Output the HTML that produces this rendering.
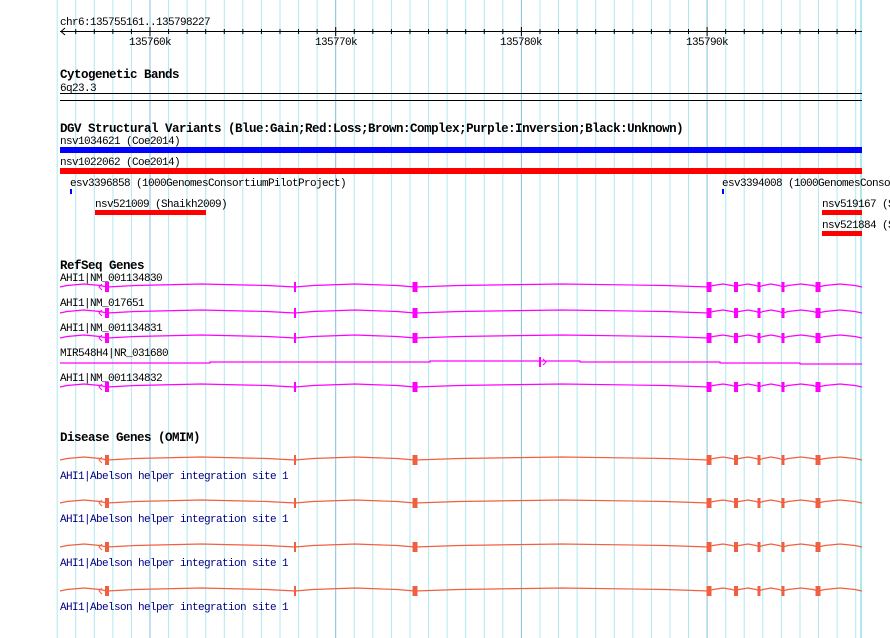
<!DOCTYPE html>
<html><head><meta charset="utf-8"><style>
html,body{margin:0;padding:0;background:#fff;width:890px;height:638px;overflow:hidden}
svg{display:block}
text{font-family:"Liberation Mono",monospace;font-size:11px;letter-spacing:-0.6px}
.b{font-weight:bold;font-size:12.5px;letter-spacing:-0.5px}
</style></head><body>
<svg id="s" width="890" height="638" xmlns="http://www.w3.org/2000/svg"></svg>
<script>
var s=document.getElementById('s'),h='';
for(var i=-5;i<=38;i++){var x=150+i*18.57;if(x<56||x>864)continue;var maj=((i%10)+10)%10==0;
h+='<line x1="'+x.toFixed(1)+'" y1="0" x2="'+x.toFixed(1)+'" y2="638" stroke="'+(maj?'#80c0e0':'#b0e8f0')+'" stroke-width="1"/>';}
h+='<rect x="860" y="0" width="2" height="638" fill="#b0e8f0"/>';
function t(x,y,str,c,b){h+='<text x="'+x+'" y="'+y+'" fill="'+(c||'#000')+'"'+(b?' class="b"':'')+'>'+str+'</text>';}
t(60,25,'chr6:135755161..135798227');
h+='<line x1="60" y1="31.5" x2="862" y2="31.5" stroke="#000"/>';
h+='<polyline points="65,28 61,31.5 65,35" fill="none" stroke="#000"/>';
for(var i=-5;i<=38;i++){var x=150+i*18.57;if(x<60||x>862)continue;var maj=((i%10)+10)%10==0;h+='<line x1="'+x+'" y1="'+(maj?27:29)+'" x2="'+x+'" y2="'+(maj?36:34)+'" stroke="#000"/>';}
t(129,45,'135760k');t(315,45,'135770k');t(500,45,'135780k');t(686,45,'135790k');
t(60,78,'Cytogenetic Bands','#000',1);t(60,91,'6q23.3');
h+='<rect x="60" y="93" width="802" height="1" fill="#000"/><rect x="60" y="100" width="802" height="1" fill="#000"/>';
t(60,132,'DGV Structural Variants (Blue:Gain;Red:Loss;Brown:Complex;Purple:Inversion;Black:Unknown)','#000',1);
t(60,144,'nsv1034621 (Coe2014)');h+='<rect x="60" y="147" width="802" height="6" fill="#0000ff"/>';
t(60,165,'nsv1022062 (Coe2014)');h+='<rect x="60" y="168" width="802" height="6" fill="#ff0000"/>';
t(70,186,'esv3396858 (1000GenomesConsortiumPilotProject)');h+='<rect x="70" y="189" width="2" height="5" fill="#0000ff"/>';
t(722,186,'esv3394008 (1000GenomesConsortiumPilotProject)');h+='<rect x="722" y="189" width="2" height="5" fill="#0000ff"/>';
t(95,207,'nsv521009 (Shaikh2009)');h+='<rect x="95" y="210" width="111" height="5" fill="#ff0000"/>';
t(822,207,'nsv519167 (Shaikh2009)');h+='<rect x="822" y="210" width="40" height="5" fill="#ff0000"/>';
t(822,228,'nsv521884 (Shaikh2009)');h+='<rect x="822" y="231" width="40" height="5" fill="#ff0000"/>';
t(60,269,'RefSeq Genes','#000',1);
var ex=[[107,4],[295,2],[415,5],[709,5],[736,4],[759,3],[783,3],[818,5]];
function gene(y,c){var segs=ex.map(function(e){return e[0]});segs.push(862);
 var p='';var a=60;for(var k=0;k<segs.length;k++){var b=segs[k];var m=(a+b)/2;p+=a+','+y+' '+(a+(m-a)*0.3).toFixed(0)+','+(y-1.5)+' '+m.toFixed(0)+','+(y-3)+' '+(b-(b-m)*0.3).toFixed(0)+','+(y-1.5)+' '+b+','+y+' ';a=b;}
 h+='<polyline points="'+p+'" fill="none" stroke="'+c+'" stroke-width="1.2"/>';
 ex.forEach(function(e){h+='<rect x="'+(e[0]-e[1]/2)+'" y="'+(y-5)+'" width="'+e[1]+'" height="10" fill="'+c+'"/>';});
 h+='<polyline points="102,'+(y-3)+' 99,'+y+' 102,'+(y+3)+'" fill="none" stroke="'+c+'"/>';}
var M='#ff00ff';
t(60,281,'AHI1|NM_001134830');gene(287,M);
t(60,306,'AHI1|NM_017651');gene(313,M);
t(60,331,'AHI1|NM_001134831');gene(338,M);
t(60,356,'MIR548H4|NR_031680');
h+='<polyline points="60,363 210,363 210,362 430,362 430,361 540,361 580,361 580,362 720,362 720,363 800,363 800,364 862,364" fill="none" stroke="'+M+'" stroke-width="1.2"/>';
h+='<rect x="539" y="357" width="2" height="10" fill="'+M+'"/><polyline points="543,359 546,362 543,365" fill="none" stroke="'+M+'"/>';
t(60,381,'AHI1|NM_001134832');gene(387,M);
t(60,441,'Disease Genes (OMIM)','#000',1);
var O='#f06040';
[460,503,547,591].forEach(function(y){gene(y,O);t(60,y+19,'AHI1|Abelson helper integration site 1','#000080');});
s.innerHTML=h;
</script>
</body></html>
